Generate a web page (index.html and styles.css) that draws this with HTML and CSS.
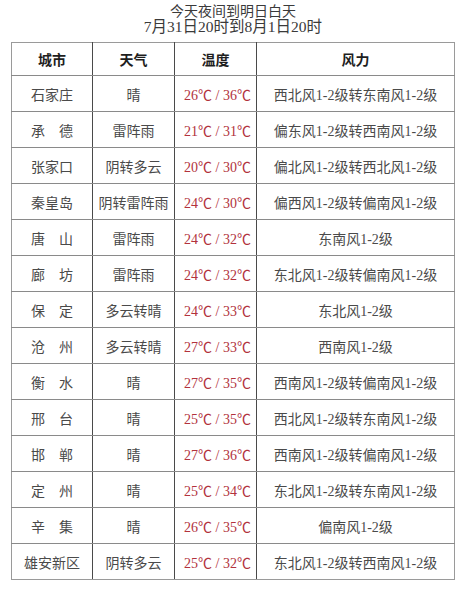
FILE: index.html
```html
<!DOCTYPE html>
<html lang="zh-CN">
<head>
<meta charset="utf-8">
<link rel="stylesheet" href="styles.css">
</head>
<body>
<div class="page">
  <div class="title">
    <div class="line">今天夜间到明日白天</div>
    <div class="line line-date">7月31日20时到8月1日20时</div>
  </div>
  <table class="wx">
    <colgroup>
      <col class="c-city"><col class="c-wea"><col class="c-temp"><col class="c-wind">
    </colgroup>
    <thead>
      <tr><th>城市</th><th>天气</th><th>温度</th><th>风力</th></tr>
    </thead>
    <tbody>
      <tr><td>石家庄</td><td>晴</td><td class="t">26℃ / 36℃</td><td>西北风1-2级转东南风1-2级</td></tr>
      <tr><td>承　德</td><td>雷阵雨</td><td class="t">21℃ / 31℃</td><td>偏东风1-2级转西南风1-2级</td></tr>
      <tr><td>张家口</td><td>阴转多云</td><td class="t">20℃ / 30℃</td><td>偏北风1-2级转西北风1-2级</td></tr>
      <tr><td>秦皇岛</td><td>阴转雷阵雨</td><td class="t">24℃ / 30℃</td><td>偏西风1-2级转偏南风1-2级</td></tr>
      <tr><td>唐　山</td><td>雷阵雨</td><td class="t">24℃ / 32℃</td><td>东南风1-2级</td></tr>
      <tr><td>廊　坊</td><td>雷阵雨</td><td class="t">24℃ / 32℃</td><td>东北风1-2级转偏南风1-2级</td></tr>
      <tr><td>保　定</td><td>多云转晴</td><td class="t">24℃ / 33℃</td><td>东北风1-2级</td></tr>
      <tr><td>沧　州</td><td>多云转晴</td><td class="t">27℃ / 33℃</td><td>西南风1-2级</td></tr>
      <tr><td>衡　水</td><td>晴</td><td class="t">27℃ / 35℃</td><td>西南风1-2级转偏南风1-2级</td></tr>
      <tr><td>邢　台</td><td>晴</td><td class="t">25℃ / 35℃</td><td>西北风1-2级转东南风1-2级</td></tr>
      <tr><td>邯　郸</td><td>晴</td><td class="t">27℃ / 36℃</td><td>西南风1-2级转偏南风1-2级</td></tr>
      <tr><td>定　州</td><td>晴</td><td class="t">25℃ / 34℃</td><td>东北风1-2级转东南风1-2级</td></tr>
      <tr><td>辛　集</td><td>晴</td><td class="t">26℃ / 35℃</td><td>偏南风1-2级</td></tr>
      <tr><td>雄安新区</td><td>阴转多云</td><td class="t">25℃ / 32℃</td><td>东北风1-2级转西南风1-2级</td></tr>
    </tbody>
  </table>
</div>
</body>
</html>
```

FILE: styles.css
```css
html, body {
  margin: 0;
  padding: 0;
  background: #ffffff;
}

.page {
  width: 464px;
  height: 600px;
  padding-top: 4px;
  box-sizing: border-box;
  font-family: "Liberation Serif", "Noto Sans CJK SC", serif;
  color: #4a4a4a;
}

.title {
  text-align: center;
  font-size: 14px;
  line-height: 15px;
  color: #3a3a3a;
  padding-left: 2px;
}

.title .line-date {
  font-size: 15.5px;
}

.wx {
  margin: 8px 0 0 11px;
  width: 443px;
  border-collapse: collapse;
  table-layout: fixed;
  font-size: 14px;
}

.c-city { width: 81px; }
.c-wea { width: 82px; }
.c-temp { width: 82px; }
.c-wind { width: 198px; }

.wx th,
.wx td {
  padding: 0;
  text-align: center;
  white-space: nowrap;
  border-top: 1px solid #8a8a8a;
  border-bottom: 1px solid #8a8a8a;
  border-left: 1px solid #4a4a4a;
  border-right: 1px solid #4a4a4a;
}

.wx th:first-child,
.wx td:first-child {
  border-left-color: #9a9a9a;
}

.wx th:last-child,
.wx td:last-child {
  border-right-color: #9a9a9a;
}

.wx thead th {
  height: 32px;
  border-top-color: #9a9a9a;
  font-weight: bold;
  color: #1e1e1e;
}

.wx tbody td {
  height: 35px;
}

.wx tbody tr:last-child td {
  border-bottom-color: #9a9a9a;
}

.wx td.t {
  color: #b2323c;
  padding-left: 4px;
}
```
